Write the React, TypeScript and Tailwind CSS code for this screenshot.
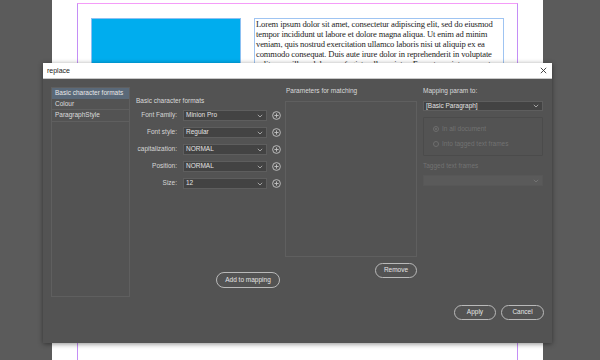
import React from 'react';

const ui = { fontFamily: '"Liberation Sans", Arial, sans-serif' };
const serif = { fontFamily: '"Liberation Serif", "Times New Roman", serif' };

const lorem = [
  'Lorem ipsum dolor sit amet, consectetur adipiscing elit, sed do eiusmod',
  'tempor incididunt ut labore et dolore magna aliqua. Ut enim ad minim',
  'veniam, quis nostrud exercitation ullamco laboris nisi ut aliquip ex ea',
  'commodo consequat. Duis aute irure dolor in reprehenderit in voluptate',
  'velit esse cillum dolore eu fugiat nulla pariatur. Excepteur sint occaecat',
];

const fields = [
  { label: 'Font Family:', value: 'Minion Pro' },
  { label: 'Font style:', value: 'Regular' },
  { label: 'capitalization:', value: 'NORMAL' },
  { label: 'Position:', value: 'NORMAL' },
  { label: 'Size:', value: '12' },
];

function Chevron({ color = '#bdbdbd' }: { color?: string }) {
  return (
    <svg width="6" height="4" viewBox="0 0 6 4">
      <path d="M0.8 0.8 L3 3 L5.2 0.8" fill="none" stroke={color} strokeWidth="0.8" />
    </svg>
  );
}

function PlusCircle() {
  return (
    <svg width="9" height="9" viewBox="0 0 9 9">
      <circle cx="4.5" cy="4.5" r="3.9" fill="none" stroke="#c4c4c4" strokeWidth="0.9" />
      <path d="M4.5 2.4 V6.6 M2.4 4.5 H6.6" stroke="#c4c4c4" strokeWidth="0.9" />
    </svg>
  );
}

function Select({ value, w }: { value: string; w: string }) {
  return (
    <div className={`${w} h-[11px] flex items-center justify-between pl-[2px] pr-[3px] bg-[#434343] border border-[#5e5e5e] text-[#e2e2e2] text-[6.5px] leading-none`}>
      <span>{value}</span>
      <Chevron />
    </div>
  );
}

function PillButton({ label, w }: { label: string; w: string }) {
  return (
    <div className={`${w} h-[15px] flex items-center justify-center rounded-full border border-[#b9b9b9] text-[#e4e4e4] text-[6.5px] leading-none`}>
      {label}
    </div>
  );
}

export default function App() {
  return (
    <div className="relative w-[600px] h-[360px] overflow-hidden bg-[#5b5b5b] flex" style={ui}>
      {/* document page */}
      <div className="ml-[52px] w-[491px] h-full bg-white pt-[3px] pl-[25px] flex flex-col">
        <div className="w-[441px] flex-1 border-t border-t-[#f49cf8] border-l border-l-[#c48ef6] border-r border-r-[#c48ef6] pt-[14px] pl-[13px] flex gap-[13px]">
          <div className="w-[150px] h-[60px] bg-[#00adee] border border-[#8cc0f2]" />
          <div className="w-[250px] h-[60px] border border-[#9fc4f2] overflow-hidden pl-[1px] pt-[0px] text-[8.6px] leading-[10px] text-[#1d1d1d] tracking-[-0.15px]" style={serif}>
            {lorem.map((l) => (
              <div key={l} className="whitespace-nowrap">{l}</div>
            ))}
          </div>
        </div>
      </div>

      {/* replace dialog */}
      <div className="absolute left-[43px] top-[63px] w-[509px] h-[280px] flex flex-col bg-[#535353] shadow-[0_1px_5px_rgba(0,0,0,0.45)]">
        <div className="h-[16px] bg-white flex items-center justify-between pl-[4px] pr-[5px] border-b border-[#c8c8c8]">
          <span className="text-[7px] text-[#222] leading-none">replace</span>
          <svg width="7" height="7" viewBox="0 0 7 7">
            <path d="M0.8 0.8 L6.2 6.2 M6.2 0.8 L0.8 6.2" stroke="#333" strokeWidth="0.9" />
          </svg>
        </div>

        <div className="flex-1 flex flex-col pl-[8px] pr-[8px] pt-[8px]">
          <div className="flex h-[210px]">
            {/* category list */}
            <div className="w-[79px] h-full border border-[#5f5f5f] text-[6.5px] leading-none">
              <div className="h-[11px] flex items-center pl-[3px] bg-[#5a6979] text-[#e8e8e8]">Basic character formats</div>
              <div className="h-[11px] flex items-center pl-[3px] border-b border-[#5f5f5f] text-[#dcdcdc]">Colour</div>
              <div className="h-[12px] flex items-center pl-[3px] border-b border-[#5f5f5f] text-[#dcdcdc]">ParagraphStyle</div>
            </div>

            {/* basic character formats form */}
            <div className="w-[155px] h-full flex flex-col">
              <div className="mt-[10px] pl-[6px] text-[6.5px] leading-[8px] text-[#dadada]">Basic character formats</div>
              <div className="mt-[5px] flex flex-col gap-[6px]">
                {fields.map((f) => (
                  <div key={f.label} className="flex items-center h-[11px]">
                    <div className="w-[47px] text-right text-[6.5px] leading-none text-[#d6d6d6]">{f.label}</div>
                    <div className="ml-[6px]">
                      <Select value={f.value} w="w-[84px]" />
                    </div>
                    <div className="ml-[5px] flex items-center">
                      <PlusCircle />
                    </div>
                  </div>
                ))}
              </div>
              <div className="mt-[83px] flex justify-end pr-[5px]">
                <div className="w-[64px] h-[16px] flex items-center justify-center rounded-full border border-[#b9b9b9] text-[#e4e4e4] text-[6.5px] leading-none">
                  Add to mapping
                </div>
              </div>
            </div>

            {/* parameters for matching */}
            <div className="w-[132px] h-full flex flex-col">
              <div className="pl-[1px] text-[6.5px] leading-[8px] text-[#dadada]">Parameters for matching</div>
              <div className="mt-[6px] h-[156px] border border-[#5f5f5f]" />
              <div className="mt-[6px] flex justify-end">
                <PillButton label="Remove" w="w-[42px]" />
              </div>
            </div>

            {/* mapping target */}
            <div className="ml-[6px] w-[120px] h-full flex flex-col">
              <div className="text-[6.5px] leading-[8px] text-[#dadada]">Mapping param to:</div>
              <div className="mt-[6px]">
                <div className="w-[120px] h-[10px] flex items-center justify-between pl-[2px] pr-[3px] bg-[#434343] border border-[#5e5e5e] text-[#e2e2e2] text-[6.5px] leading-none">
                  <span>[Basic Paragraph]</span>
                  <Chevron />
                </div>
              </div>
              <div className="mt-[6px] h-[39px] border border-[#4b4b4b] rounded-[1px] flex flex-col justify-center gap-[8px] pl-[9px] text-[6.5px] leading-none text-[#727272]">
                <div className="flex items-center gap-[3px]">
                  <span className="w-[6px] h-[6px] rounded-full border border-[#6e6e6e] flex items-center justify-center">
                    <span className="w-[2px] h-[2px] rounded-full bg-[#6e6e6e]" />
                  </span>
                  In all document
                </div>
                <div className="flex items-center gap-[3px]">
                  <span className="w-[6px] h-[6px] rounded-full border border-[#6e6e6e]" />
                  Into tagged text frames
                </div>
              </div>
              <div className="mt-[6px] text-[6.5px] leading-[8px] text-[#727272]">Tagged text frames</div>
              <div className="mt-[5px] w-[120px] h-[11px] flex items-center justify-end pr-[3px] bg-[#5a5a5a] border border-[#575757]">
                <Chevron color="#7a7a7a" />
              </div>
            </div>
          </div>

          <div className="mt-[8px] flex justify-end gap-[5px]">
            <PillButton label="Apply" w="w-[42px]" />
            <PillButton label="Cancel" w="w-[43px]" />
          </div>
        </div>
      </div>
    </div>
  );
}
